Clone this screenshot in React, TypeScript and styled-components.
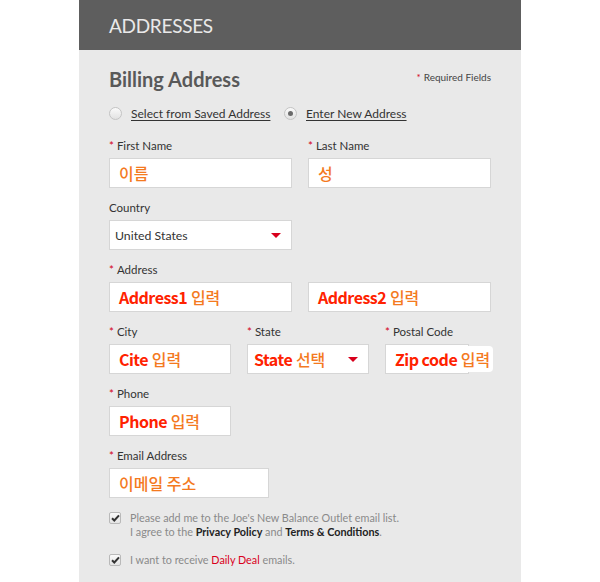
import React from "react";
import styled, { createGlobalStyle } from "styled-components";

const Global = createGlobalStyle`
  html, body { margin: 0; padding: 0; background: #ffffff; }
  body { font-family: Lato, "Open Sans", sans-serif; }
`;

const Page = styled.div`
  width: 600px;
  height: 582px;
  display: flex;
  justify-content: center;
  overflow: hidden;
`;

const Panel = styled.div`
  width: 442px;
  background: #e9e9e9;
  display: flex;
  flex-direction: column;
`;

const Header = styled.div`
  height: 50px;
  background: #5e5e5e;
  display: flex;
  align-items: center;
  padding-left: 30px;
  color: #e9e9e9;
  font-family: Lato, sans-serif;
  font-size: 19px;
  letter-spacing: -0.3px;
`;

const Body = styled.div`
  padding: 19px 30px 0 30px;
  display: flex;
  flex-direction: column;
`;

const TitleRow = styled.div`
  height: 20px;
  display: flex;
  justify-content: space-between;
  align-items: flex-start;
`;

const Title = styled.h2`
  margin: 0;
  font-family: Lato, sans-serif;
  font-weight: 700;
  font-size: 20px;
  line-height: 20px;
  color: #595959;
`;

const Required = styled.span`
  font-size: 10px;
  color: #444;
  margin-top: 2px;
`;

const Star = styled.span`
  color: #d4001a;
  margin-right: 3px;
`;

const RadioRow = styled.div`
  margin-top: 14px;
  height: 20px;
  display: flex;
  align-items: center;
`;

const RadioItem = styled.label<{ $w: number }>`
  width: ${(p) => p.$w}px;
  display: flex;
  align-items: center;
  font-size: 12px;
  color: #333;
`;

const RadioCircle = styled.span<{ $on?: boolean }>`
  width: 11px;
  height: 11px;
  border-radius: 50%;
  border: 1px solid #c4c4c4;
  background: linear-gradient(#fafafa, #e2e2e2);
  margin-right: 9px;
  display: flex;
  align-items: center;
  justify-content: center;
  &::after {
    content: "";
    width: 5px;
    height: 5px;
    border-radius: 50%;
    background: ${(p) => (p.$on ? "#6a6a6a" : "transparent")};
  }
`;

const LinkText = styled.span`
  text-decoration: underline;
  text-underline-offset: 2px;
`;

const Fields = styled.div`
  margin-top: 16px;
  display: flex;
  flex-direction: column;
  gap: 13px;
`;

const Row = styled.div`
  display: flex;
  gap: 16px;
`;

const Field = styled.div<{ $w: number }>`
  width: ${(p) => p.$w}px;
  display: flex;
  flex-direction: column;
`;

const Label = styled.div`
  height: 14px;
  line-height: 14px;
  font-size: 11.5px;
  color: #333;
  margin-bottom: 5px;
  white-space: nowrap;
`;

const Box = styled.div<{ $pad?: number }>`
  position: relative;
  height: 30px;
  box-sizing: border-box;
  background: #fff;
  border: 1px solid #d6d6d6;
  display: flex;
  align-items: center;
  padding-left: ${(p) => p.$pad ?? 9}px;
  white-space: nowrap;
`;

const Plain = styled.span`
  font-size: 12.3px;
  color: #333;
`;

const Note = styled.span`
  font-family: "Noto Sans CJK KR", "Open Sans", sans-serif;
  font-weight: 700;
  font-size: 16px;
`;

const En = styled.span`
  color: #ff2200;
  letter-spacing: -0.5px;
`;

const Ko = styled.span<{ $halo?: boolean }>`
  color: #f47a1f;
  font-weight: 500;
  ${(p) =>
    p.$halo
      ? `background:#fff; border-radius:4px; padding:1px 3px 1px 2px; margin-left:-2px; position:relative; z-index:1;`
      : ""}
`;

const Arrow = styled.span`
  position: absolute;
  right: 10px;
  top: 12px;
  width: 0;
  height: 0;
  border-left: 5px solid transparent;
  border-right: 5px solid transparent;
  border-top: 5px solid #d8001c;
`;

const Checks = styled.div`
  margin-top: 13px;
  display: flex;
  flex-direction: column;
  gap: 14px;
`;

const CheckRow = styled.div`
  display: flex;
  align-items: flex-start;
  gap: 9px;
`;

const CheckBox = styled.span`
  width: 10px;
  height: 10px;
  margin-top: 1px;
  flex: none;
  border: 1px solid #b9b9b9;
  border-radius: 2px;
  background: linear-gradient(#fafafa, #e4e4e4);
  display: flex;
  align-items: center;
  justify-content: center;
`;

const CheckText = styled.div`
  font-size: 10.8px;
  line-height: 14px;
  color: #8a8a8a;
`;

const Strong = styled.b`
  color: #222;
  font-weight: 700;
`;

const Red = styled.span`
  color: #d9001b;
`;

const Tick = () => (
  <svg width="9" height="8" viewBox="0 0 9 8">
    <path d="M1 4.2 L3.3 6.5 L8 1.3" stroke="#333" strokeWidth="2" fill="none" />
  </svg>
);

export default function App() {
  return (
    <>
      <Global />
      <Page>
        <Panel>
          <Header>ADDRESSES</Header>
          <Body>
            <TitleRow>
              <Title>Billing Address</Title>
              <Required>
                <Star>*</Star>Required Fields
              </Required>
            </TitleRow>
            <RadioRow>
              <RadioItem $w={175}>
                <RadioCircle />
                <LinkText>Select from Saved Address</LinkText>
              </RadioItem>
              <RadioItem $w={150}>
                <RadioCircle $on />
                <LinkText>Enter New Address</LinkText>
              </RadioItem>
            </RadioRow>
            <Fields>
              <Row>
                <Field $w={183}>
                  <Label><Star>*</Star>First Name</Label>
                  <Box><Note><Ko>이름</Ko></Note></Box>
                </Field>
                <Field $w={183}>
                  <Label><Star>*</Star>Last Name</Label>
                  <Box><Note><Ko>성</Ko></Note></Box>
                </Field>
              </Row>
              <Row>
                <Field $w={183}>
                  <Label>Country</Label>
                  <Box $pad={5}>
                    <Plain>United States</Plain>
                    <Arrow />
                  </Box>
                </Field>
              </Row>
              <Row>
                <Field $w={183}>
                  <Label><Star>*</Star>Address</Label>
                  <Box><Note><En>Address1</En> <Ko>입력</Ko></Note></Box>
                </Field>
                <Field $w={183}>
                  <Label>&nbsp;</Label>
                  <Box><Note><En>Address2</En> <Ko>입력</Ko></Note></Box>
                </Field>
              </Row>
              <Row>
                <Field $w={122}>
                  <Label><Star>*</Star>City</Label>
                  <Box><Note><En>Cite</En> <Ko>입력</Ko></Note></Box>
                </Field>
                <Field $w={122}>
                  <Label><Star>*</Star>State</Label>
                  <Box $pad={6}>
                    <Note><En>State</En> <Ko>선택</Ko></Note>
                    <Arrow />
                  </Box>
                </Field>
                <Field $w={84}>
                  <Label><Star>*</Star>Postal Code</Label>
                  <Box><Note><En>Zip code</En> <Ko $halo>입력</Ko></Note></Box>
                </Field>
              </Row>
              <Row>
                <Field $w={122}>
                  <Label><Star>*</Star>Phone</Label>
                  <Box><Note><En>Phone</En> <Ko>입력</Ko></Note></Box>
                </Field>
              </Row>
              <Row>
                <Field $w={160}>
                  <Label><Star>*</Star>Email Address</Label>
                  <Box><Note><Ko>이메일 주소</Ko></Note></Box>
                </Field>
              </Row>
            </Fields>
            <Checks>
              <CheckRow>
                <CheckBox><Tick /></CheckBox>
                <CheckText>
                  Please add me to the Joe's New Balance Outlet email list.
                  <br />
                  I agree to the <Strong>Privacy Policy</Strong> and <Strong>Terms &amp; Conditions</Strong>.
                </CheckText>
              </CheckRow>
              <CheckRow>
                <CheckBox><Tick /></CheckBox>
                <CheckText>
                  I want to receive <Red>Daily Deal</Red> emails.
                </CheckText>
              </CheckRow>
            </Checks>
          </Body>
        </Panel>
      </Page>
    </>
  );
}
